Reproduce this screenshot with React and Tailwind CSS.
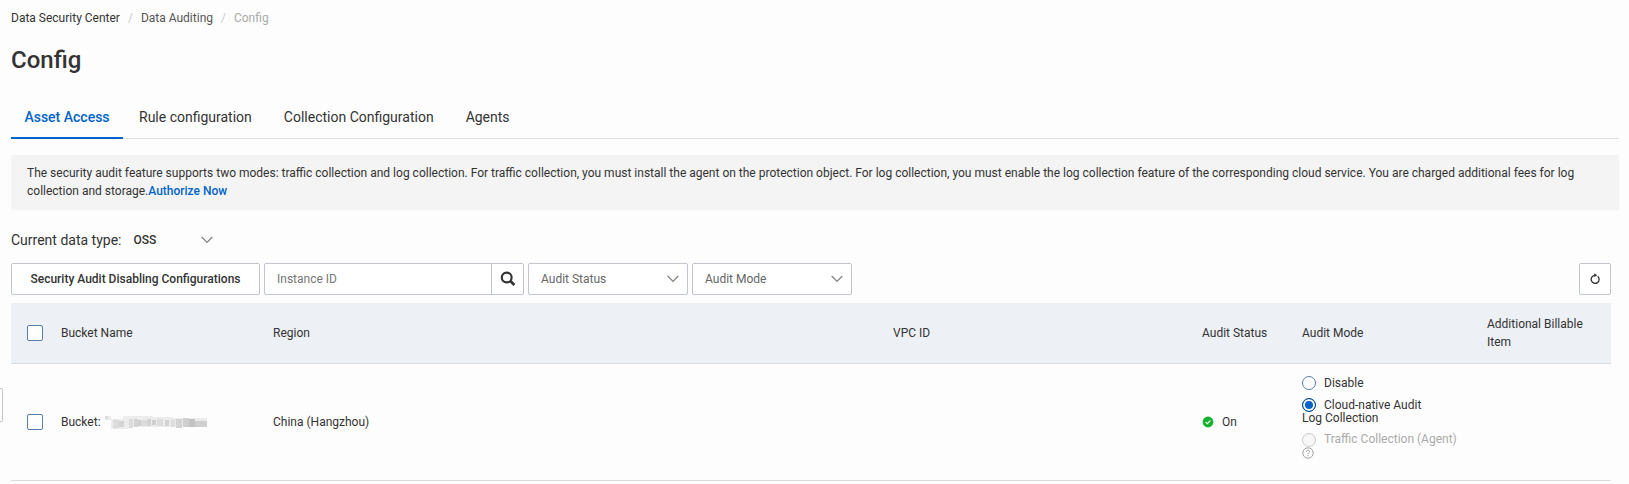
import { useState } from "react";

const tabs = ["Asset Access", "Rule configuration", "Collection Configuration", "Agents"];

function Chevron() {
  return (
    <svg className="pointer-events-none h-2 w-3 shrink-0" viewBox="0 0 12 8" fill="none" stroke="#808080" strokeWidth="1.2" aria-hidden="true">
      <path d="M0.7 1 L6 6.5 L11.3 1" />
    </svg>
  );
}

function FilterSelect({ label }) {
  return (
    <div className="grid h-8 w-40 items-center rounded-xs border border-[#c0c6cc] bg-white">
      <select aria-label={label} className="col-start-1 row-start-1 h-full w-full appearance-none bg-transparent px-3 text-xs text-[#666]">
        <option>{label}</option>
      </select>
      <span className="pointer-events-none col-start-1 row-start-1 mr-2 justify-self-end">
        <Chevron />
      </span>
    </div>
  );
}

function Check({ label }) {
  return (
    <input
      type="checkbox"
      aria-label={label}
      className="block size-4 appearance-none rounded-xs border border-[#5a7ca5] bg-white checked:bg-[#0064c8]"
    />
  );
}

function ModeRadio({ value, mode, setMode, disabled }) {
  return (
    <input
      type="radio"
      name="audit-mode"
      value={value}
      checked={mode === value}
      disabled={disabled}
      onChange={() => setMode(value)}
      className="mr-2 inline-block size-3.5 appearance-none rounded-full border border-[#5a7ca5] bg-white align-middle checked:border-[#00438a] checked:bg-[#0064c8] checked:shadow-[inset_0_0_0_2px_white] disabled:border-[#c8ccd0] disabled:bg-[#f7f7f7]"
    />
  );
}

export default function App() {
  const [tab, setTab] = useState(tabs[0]);
  const [mode, setMode] = useState("native");

  return (
    <div className="relative min-h-screen bg-[#fdfdfd] pl-[11px] font-['Roboto','Noto_Sans',sans-serif] text-xs text-[#333]">
      <button type="button" aria-label="Expand menu" className="absolute top-[388px] left-0 h-[34px] w-[3px] rounded-r-xs border border-l-0 border-[#c0c6cc] bg-white shadow-md" />

      <nav aria-label="Breadcrumb" className="flex h-9 items-center gap-2">
        <a href="#center">Data Security Center</a>
        <span className="text-[#ccc]">/</span>
        <a href="#auditing" className="text-[#555]">Data Auditing</a>
        <span className="text-[#ccc]">/</span>
        <span className="text-[#aaa]">Config</span>
      </nav>

      <h1 className="mt-2 text-2xl leading-8 font-medium">Config</h1>

      <div role="tablist" className="mt-5 mr-[10px] flex h-[43px] border-b border-[#dedede]">
        {tabs.map((name) => (
          <button
            key={name}
            type="button"
            role="tab"
            aria-selected={tab === name}
            onClick={() => setTab(name)}
            className={
              tab === name
                ? "-mb-px min-w-28 border-b-2 border-[#0064c8] px-3 text-sm font-medium text-[#0064c8]"
                : "-mb-px border-b-2 border-transparent px-4 text-sm"
            }
          >
            {name}
          </button>
        ))}
      </div>

      <p className="mt-4 mr-[10px] bg-[#f4f4f4] px-4 pt-[9px] pb-[10px] leading-[18px]">
        The security audit feature supports two modes: traffic collection and log collection. For traffic collection, you must install the agent on the protection object. For log collection, you must enable the log collection feature of the corresponding cloud service. You are charged additional fees for log collection and storage.
        <a href="#authorize" className="font-medium text-[#0064c8]">Authorize Now</a>
      </p>

      <div className="mt-5 flex h-5 items-center">
        <label htmlFor="data-type" className="text-sm">Current data type:</label>
        <div className="ml-3 grid w-20 items-center">
          <select id="data-type" className="col-start-1 row-start-1 w-full appearance-none bg-transparent text-xs font-medium">
            <option>OSS</option>
          </select>
          <span className="pointer-events-none col-start-1 row-start-1 justify-self-end">
            <Chevron />
          </span>
        </div>
      </div>

      <div className="mt-[13px] mr-[18px] flex gap-1">
        <button type="button" className="h-8 w-[249px] rounded-xs border border-[#c0c6cc] bg-white font-medium">
          Security Audit Disabling Configurations
        </button>
        <div className="flex h-8 w-[260px] rounded-xs border border-[#c0c6cc] bg-white">
          <input type="text" aria-label="Instance ID" placeholder="Instance ID" className="min-w-0 flex-1 px-3 placeholder:text-[#777]" />
          <button type="button" aria-label="Search" className="flex w-8 items-center justify-center border-l border-[#c0c6cc]">
            <svg className="size-4" viewBox="0 0 16 16" fill="none" stroke="#333" aria-hidden="true">
              <circle cx="6.7" cy="6.5" r="4.9" strokeWidth="2.2" />
              <path d="M10.3 10 L14.4 14" strokeWidth="2.6" />
            </svg>
          </button>
        </div>
        <FilterSelect label="Audit Status" />
        <FilterSelect label="Audit Mode" />
        <button type="button" aria-label="Refresh" className="ml-auto flex size-8 items-center justify-center rounded-xs border border-[#c0c6cc] bg-white">
          <svg className="size-3" viewBox="0 0 12 12" aria-hidden="true">
            <path d="M8.7 3.3 A4 4 0 1 1 5.6 2.4" fill="none" stroke="#333" strokeWidth="1.3" />
            <path d="M5.2 0.3 L8.2 2.3 L5.2 4.2 Z" fill="#333" />
          </svg>
        </button>
      </div>

      <div className="mt-2 mr-[18px]">
        <table className="w-full table-fixed border-collapse text-left">
          <colgroup>
            <col className="w-[34px]" />
            <col className="w-[212px]" />
            <col className="w-[38.75%]" />
            <col />
            <col className="w-[100px]" />
            <col className="w-[185px]" />
            <col className="w-[140px]" />
          </colgroup>
          <thead>
            <tr className="h-[60px] border-b border-[#d9dde1] bg-[#edf0f5]">
              <th className="pl-4"><Check label="Select all buckets" /></th>
              <th className="px-4 font-normal">Bucket Name</th>
              <th className="px-4 font-normal">Region</th>
              <th className="px-4 font-normal">VPC ID</th>
              <th className="pl-4 font-normal">Audit Status</th>
              <th className="px-4 font-normal">Audit Mode</th>
              <th className="pr-2 pl-4 leading-[18px] font-normal">Additional Billable Item</th>
            </tr>
          </thead>
          <tbody>
            <tr className="h-[117px] border-b border-[#d9dde1]">
              <td className="pl-4"><Check label="Select bucket" /></td>
              <td className="px-4">
                <div className="flex items-center gap-1">
                  Bucket:
                  <svg className="h-4 w-[102px]" viewBox="0 0 102 16" aria-hidden="true">
                    <path d="M0 2h6v4H0zM6 5h18v10H6zM18 2h30v11H18zM48 3h20v10H48zM66 4h36v9H66z" fill="#ececec" />
                    <path d="M0 2h3v3H0zM8 6h6v8H8zM24 5h4v9h-4zM36 6h6v6h-6zM52 5h6v7h-6zM66 6h4v7h-4z" fill="#dcdcdc" />
                    <path d="M14 7h5v6h-5zM29 5h4v8h-4zM42 5h4v7h-4zM60 6h4v6h-4zM71 5h6v9h-6z" fill="#d4d2d2" />
                    <path d="M33 6h3v6h-3zM47 6h4v5h-4zM78 4h6v9h-6zM90 7h12v6H90z" fill="#cfcfd2" />
                    <path d="M84 5h6v8h-6z" fill="#c4c2c2" />
                  </svg>
                </div>
              </td>
              <td className="px-4">China (Hangzhou)</td>
              <td className="px-4" />
              <td className="pl-4">
                <div className="flex items-center gap-2">
                  <svg className="size-3" viewBox="0 0 12 12" aria-hidden="true">
                    <circle cx="6" cy="6" r="5.4" fill="#11b32b" />
                    <path d="M3.6 6.1 L5.3 7.7 L8.4 4.5" fill="none" stroke="white" strokeWidth="1.1" />
                  </svg>
                  On
                </div>
              </td>
              <td className="px-4 pb-2">
                <div className="flex flex-col gap-2 leading-[13px]">
                  <label>
                    <ModeRadio value="disable" mode={mode} setMode={setMode} />
                    <span className="align-middle">Disable</span>
                  </label>
                  <label className="w-32">
                    <ModeRadio value="native" mode={mode} setMode={setMode} />
                    <span className="align-middle">Cloud-native Audit Log Collection</span>
                  </label>
                  <div>
                    <label className="whitespace-nowrap text-[#aaa]">
                      <ModeRadio value="agent" mode={mode} setMode={setMode} disabled />
                      <span className="align-middle">Traffic Collection (Agent)</span>
                    </label>
                    <svg className="block size-3" viewBox="0 0 12 12" fill="none" stroke="#999" aria-hidden="true">
                      <circle cx="6" cy="6" r="5.2" strokeWidth="0.9" />
                      <path d="M4.4 4.9 C4.4 2.7 7.6 2.8 7.6 4.7 C7.6 5.8 6 5.9 6 7.2 M6 8.1 V9.1" strokeWidth="1" />
                    </svg>
                  </div>
                </div>
              </td>
              <td />
            </tr>
          </tbody>
        </table>
      </div>
    </div>
  );
}
